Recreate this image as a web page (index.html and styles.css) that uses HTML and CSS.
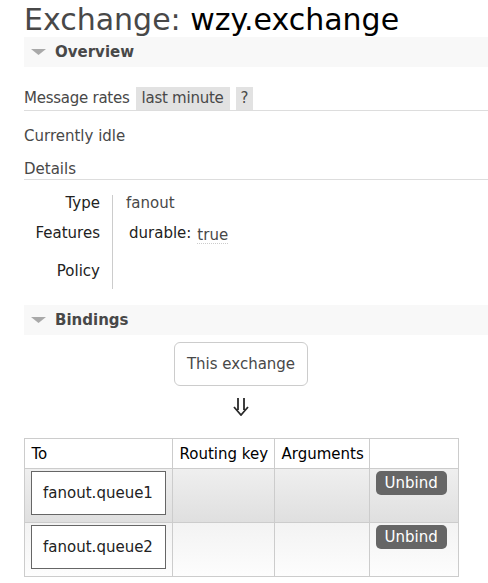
FILE: index.html
```html
<!DOCTYPE html>
<html lang="en">
<head>
<meta charset="utf-8">
<title>Exchange: wzy.exchange</title>
<link rel="stylesheet" href="styles.css">
</head>
<body>
<div class="page">
  <h1>Exchange: <b>wzy.exchange</b></h1>

  <div class="section">
    <h2 class="section-head"><svg class="tri" viewBox="0 0 15 6"><polygon points="0,0 15,0 7.5,6" fill="#a9a9a9"/></svg>Overview</h2>
    <div class="rates">
      <span>Message rates</span>
      <span class="opt">last minute</span>
      <span class="help">?</span>
    </div>
    <p class="idle">Currently idle</p>
    <h3 class="details-head">Details</h3>
    <table class="facts">
      <tr class="r1"><th>Type</th><td>fanout</td></tr>
      <tr class="r2"><th>Features</th><td><span class="feat">durable:</span><span class="val">true</span></td></tr>
      <tr class="r3"><th>Policy</th><td></td></tr>
    </table>
  </div>

  <div class="section">
    <h2 class="section-head"><svg class="tri" viewBox="0 0 15 6"><polygon points="0,0 15,0 7.5,6" fill="#a9a9a9"/></svg>Bindings</h2>
    <div class="bindings">
      <div class="this-box">This exchange</div>
      <svg class="arrow" viewBox="0 0 16 18"><path d="M5 0V12M11 0V12M1 9L8 17L15 9" fill="none" stroke="#2a2a2a" stroke-width="1.8"/></svg>
      <table class="bind">
        <colgroup><col class="c1"><col class="c2"><col class="c3"><col class="c4"></colgroup>
        <tr><th>To</th><th>Routing key</th><th>Arguments</th><th></th></tr>
        <tr class="alt1">
          <td><span class="queue">fanout.queue1</span></td><td></td><td></td>
          <td><button class="unbind">Unbind</button></td>
        </tr>
        <tr class="alt2">
          <td><span class="queue">fanout.queue2</span></td><td></td><td></td>
          <td><button class="unbind">Unbind</button></td>
        </tr>
      </table>
    </div>
  </div>
</div>
</body>
</html>
```

FILE: styles.css
```css
body {
  margin: 0;
  font-family: "DejaVu Sans", Verdana, sans-serif;
  font-size: 15px;
  color: #484848;
  background: #fff;
  overflow: hidden;
}
.page {
  padding-left: 24px;
}
h1 {
  margin: 0;
  padding-top: 3px;
  font-size: 30px;
  line-height: 34px;
  font-weight: normal;
  color: #484848;
  white-space: nowrap;
}
h1 b {
  font-weight: normal;
  color: #000;
}
.section-head {
  margin: 0;
  display: flex;
  align-items: center;
  gap: 9px;
  height: 30px;
  padding-left: 7px;
  background: #f8f8f8;
  font-size: 15px;
  font-weight: bold;
  line-height: 20px;
  color: #484848;
}
.section + .section .section-head {
  margin-top: 16px;
}
.tri {
  width: 15px;
  height: 6px;
  flex: none;
}
.rates {
  margin-top: 20px;
  display: flex;
  gap: 6px;
  height: 23px;
  line-height: 23px;
  letter-spacing: -0.25px;
  border-bottom: 1px solid #ddd;
}
.opt {
  background: #e2e2e2;
  padding: 0 6px;
}
.help {
  background: #e2e2e2;
  padding: 0 5px;
}
.idle {
  margin: 15px 0 0;
  line-height: 20px;
}
.details-head {
  margin: 13px 0 0;
  font-size: 15px;
  font-weight: normal;
  line-height: 20px;
  border-bottom: 1px solid #ddd;
}
.facts {
  margin-top: 15px;
  border-collapse: collapse;
}
.facts th {
  width: 76px;
  padding: 0 12px 0 0;
  text-align: right;
  font-weight: normal;
  color: #222;
  vertical-align: top;
  line-height: 17px;
  border-right: 1px solid #ccc;
}
.facts td {
  padding: 0 0 0 13px;
  vertical-align: top;
  line-height: 17px;
}
.facts .r1 { height: 30px; }
.facts .r2 { height: 38px; }
.facts .r3 { height: 26px; }
.feat {
  margin-left: 3px;
  color: #222;
}
.val {
  display: inline-block;
  margin-left: 6px;
  vertical-align: -2px;
  line-height: 16px;
  border-bottom: 1px dotted #ccc;
}
.bindings {
  width: 434px;
  display: flex;
  flex-direction: column;
  align-items: center;
}
.this-box {
  margin-top: 7px;
  padding: 12px;
  border: 1px solid #ccc;
  border-radius: 6px;
  line-height: 18px;
}
.arrow {
  margin-top: 12px;
  width: 16px;
  height: 18px;
}
.bind {
  margin-top: 22px;
  width: 434px;
  table-layout: fixed;
  border-collapse: collapse;
}
.c1 { width: 148px; }
.c2 { width: 102px; }
.c3 { width: 95px; }
.c4 { width: 89px; }
.bind th {
  font-weight: normal;
  color: #000;
  text-align: left;
  padding: 5px 7px 4px;
  line-height: 20px;
  border: 1px solid #ccc;
  background: #fff;
  white-space: nowrap;
}
.bind td {
  border: 1px solid #ccc;
  padding: 2px 6px 7px;
  vertical-align: top;
}
.alt1 {
  background: linear-gradient(#efefef, #dfdfdf);
}
.alt2 {
  background: linear-gradient(#f3f3f3, #fdfdfd);
}
.queue {
  display: block;
  border: 1px solid #666;
  background: #fff;
  padding: 12px 0;
  line-height: 18px;
  text-align: center;
  color: #222;
}
.unbind {
  display: inline-block;
  border: none;
  margin: 0;
  background: #666;
  color: #fff;
  border-radius: 5px;
  padding: 0 9px;
  font: inherit;
  line-height: 24px;
}
```
